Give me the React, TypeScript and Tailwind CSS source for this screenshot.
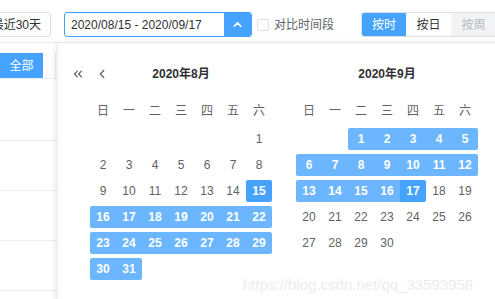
import { ChevronLeft, ChevronsLeft, ChevronUp } from 'lucide-react';

type Cell = number | null;

const WEEK = ['日', '一', '二', '三', '四', '五', '六'];

const AUG: Cell[][] = [
  [null, null, null, null, null, null, 1],
  [2, 3, 4, 5, 6, 7, 8],
  [9, 10, 11, 12, 13, 14, 15],
  [16, 17, 18, 19, 20, 21, 22],
  [23, 24, 25, 26, 27, 28, 29],
  [30, 31, null, null, null, null, null],
];

const SEP: Cell[][] = [
  [null, null, 1, 2, 3, 4, 5],
  [6, 7, 8, 9, 10, 11, 12],
  [13, 14, 15, 16, 17, 18, 19],
  [20, 21, 22, 23, 24, 25, 26],
  [27, 28, 29, 30, null, null, null],
];

// range is Aug 15 -> Sep 17, month 8 or 9
const dayKey = (m: number, d: number) => m * 100 + d;
const START = dayKey(8, 15);
const END = dayKey(9, 17);

function MonthPanel({ title, month, rows }: { title: string; month: number; rows: Cell[][] }) {
  const inRange = (d: Cell) => d !== null && dayKey(month, d) >= START && dayKey(month, d) <= END;

  return (
    <div className="w-[182px] shrink-0">
      <div className="h-[22px] flex items-center justify-center text-[12px] font-bold text-[#303133]">
        {title}
      </div>
      <div className="mt-[15px] flex h-[22px] items-center">
        {WEEK.map((w) => (
          <div key={w} className="w-[26px] text-center text-[12px] text-[#606266]">
            {w}
          </div>
        ))}
      </div>
      <div className="mt-[6px] flex flex-col gap-[4px]">
        {rows.map((row, ri) => (
          <div key={ri} className="flex h-[22px]">
            {row.map((d, ci) => {
              const on = inRange(d);
              const edge = d !== null && (dayKey(month, d) === START || dayKey(month, d) === END);
              const first = on && (ci === 0 || !inRange(row[ci - 1]));
              const last = on && (ci === 6 || !inRange(row[ci + 1]));
              return (
                <div
                  key={ci}
                  className={`w-[26px] h-[22px] flex items-center justify-center text-[12px] ${
                    on ? 'text-white font-bold' : 'text-[#606266]'
                  } ${edge ? 'bg-[#45a2ff]' : on ? 'bg-[#6bb6ff]' : ''} ${first ? 'rounded-l-[2px]' : ''} ${
                    last ? 'rounded-r-[2px]' : ''
                  }`}
                >
                  {d ?? ''}
                </div>
              );
            })}
          </div>
        ))}
      </div>
    </div>
  );
}

export default function App() {
  return (
    <div
      className="relative w-[495px] h-[299px] overflow-hidden bg-white"
      style={{ fontFamily: '"Liberation Sans", "Noto Sans CJK SC", sans-serif' }}
    >
      {/* toolbar */}
      <div className="h-[43px] pt-[12px] flex items-start border-b border-[#ebeef5]">
        <div className="shrink-0 ml-[-20px] w-[71px] h-[25px] border border-[#dcdfe6] rounded-[3px] flex items-center justify-end pr-[9px] text-[12px] text-[#303133] whitespace-nowrap">
          最近30天
        </div>
        <div className="shrink-0 ml-[13px] w-[188px] h-[25px] flex border border-[#409eff] rounded-[3px] overflow-hidden">
          <div className="flex-1 flex items-center pl-[6px] text-[12px] text-[#303133] whitespace-nowrap">
            2020/08/15 - 2020/09/17
          </div>
          <div className="w-[27px] bg-[#45a3ff] flex items-center justify-center">
            <ChevronUp size={13} strokeWidth={3} color="#ffffff" />
          </div>
        </div>
        <div className="shrink-0 ml-[5px] w-[104px] h-[25px] flex items-center">
          <div className="w-[12px] h-[12px] border border-[#dcdfe6] rounded-[2px] bg-white" />
          <span className="ml-[5px] text-[12px] text-[#606266] whitespace-nowrap">对比时间段</span>
        </div>
        <div className="shrink-0 h-[25px] flex border border-[#dcdfe6] rounded-l-[3px] overflow-hidden text-[12px]">
          <div className="w-[44px] bg-[#45a3ff] text-white flex items-center justify-center">按时</div>
          <div className="w-[45px] bg-white text-[#303133] flex items-center justify-center">按日</div>
          <div className="w-[45px] bg-[#f2f3f5] text-[#b4b7bd] flex items-center justify-center">按周</div>
        </div>
      </div>

      {/* content behind the picker */}
      <div className="pt-[10px]">
        <div className="flex items-start">
          <div className="w-[43px] h-[25px] bg-[#45a3ff] text-white text-[12px] flex items-center justify-center">
            全部
          </div>
          <div className="ml-[12px] w-[40px] h-[25px] border-t border-l border-[#ebeef5]" />
        </div>
        <div className="w-[57px] border-t border-[#ebeef5]" />
        <div className="w-[57px] h-[62px] border-b border-[#ebeef5]" />
        <div className="w-[57px] h-[50px] border-b border-[#ebeef5]" />
        <div className="w-[57px] h-[50px] border-b border-[#ebeef5]" />
        <div className="w-[57px] h-[50px] border-b border-[#ebeef5]" />
      </div>

      {/* date range picker dropdown */}
      <div className="absolute left-[57px] top-[43px] w-[460px] h-[280px] bg-white shadow-[-2px_0_6px_rgba(0,0,0,0.08)] border-l border-[#ebeef5]">
        <div className="relative flex pl-[32px] pt-[20px] gap-[24px]">
          <div className="absolute left-[13px] top-[24px] flex items-center gap-[10px] text-[#606266]">
            <ChevronsLeft size={14} strokeWidth={2.2} />
            <ChevronLeft size={14} strokeWidth={2.2} />
          </div>
          <MonthPanel title="2020年8月" month={8} rows={AUG} />
          <MonthPanel title="2020年9月" month={9} rows={SEP} />
        </div>
      </div>

      {/* watermark */}
      <div className="absolute left-[243px] top-[274px] text-[15px] text-[#ececec] whitespace-nowrap">
        https://blog.csdn.net/qq_33593958
      </div>
    </div>
  );
}
